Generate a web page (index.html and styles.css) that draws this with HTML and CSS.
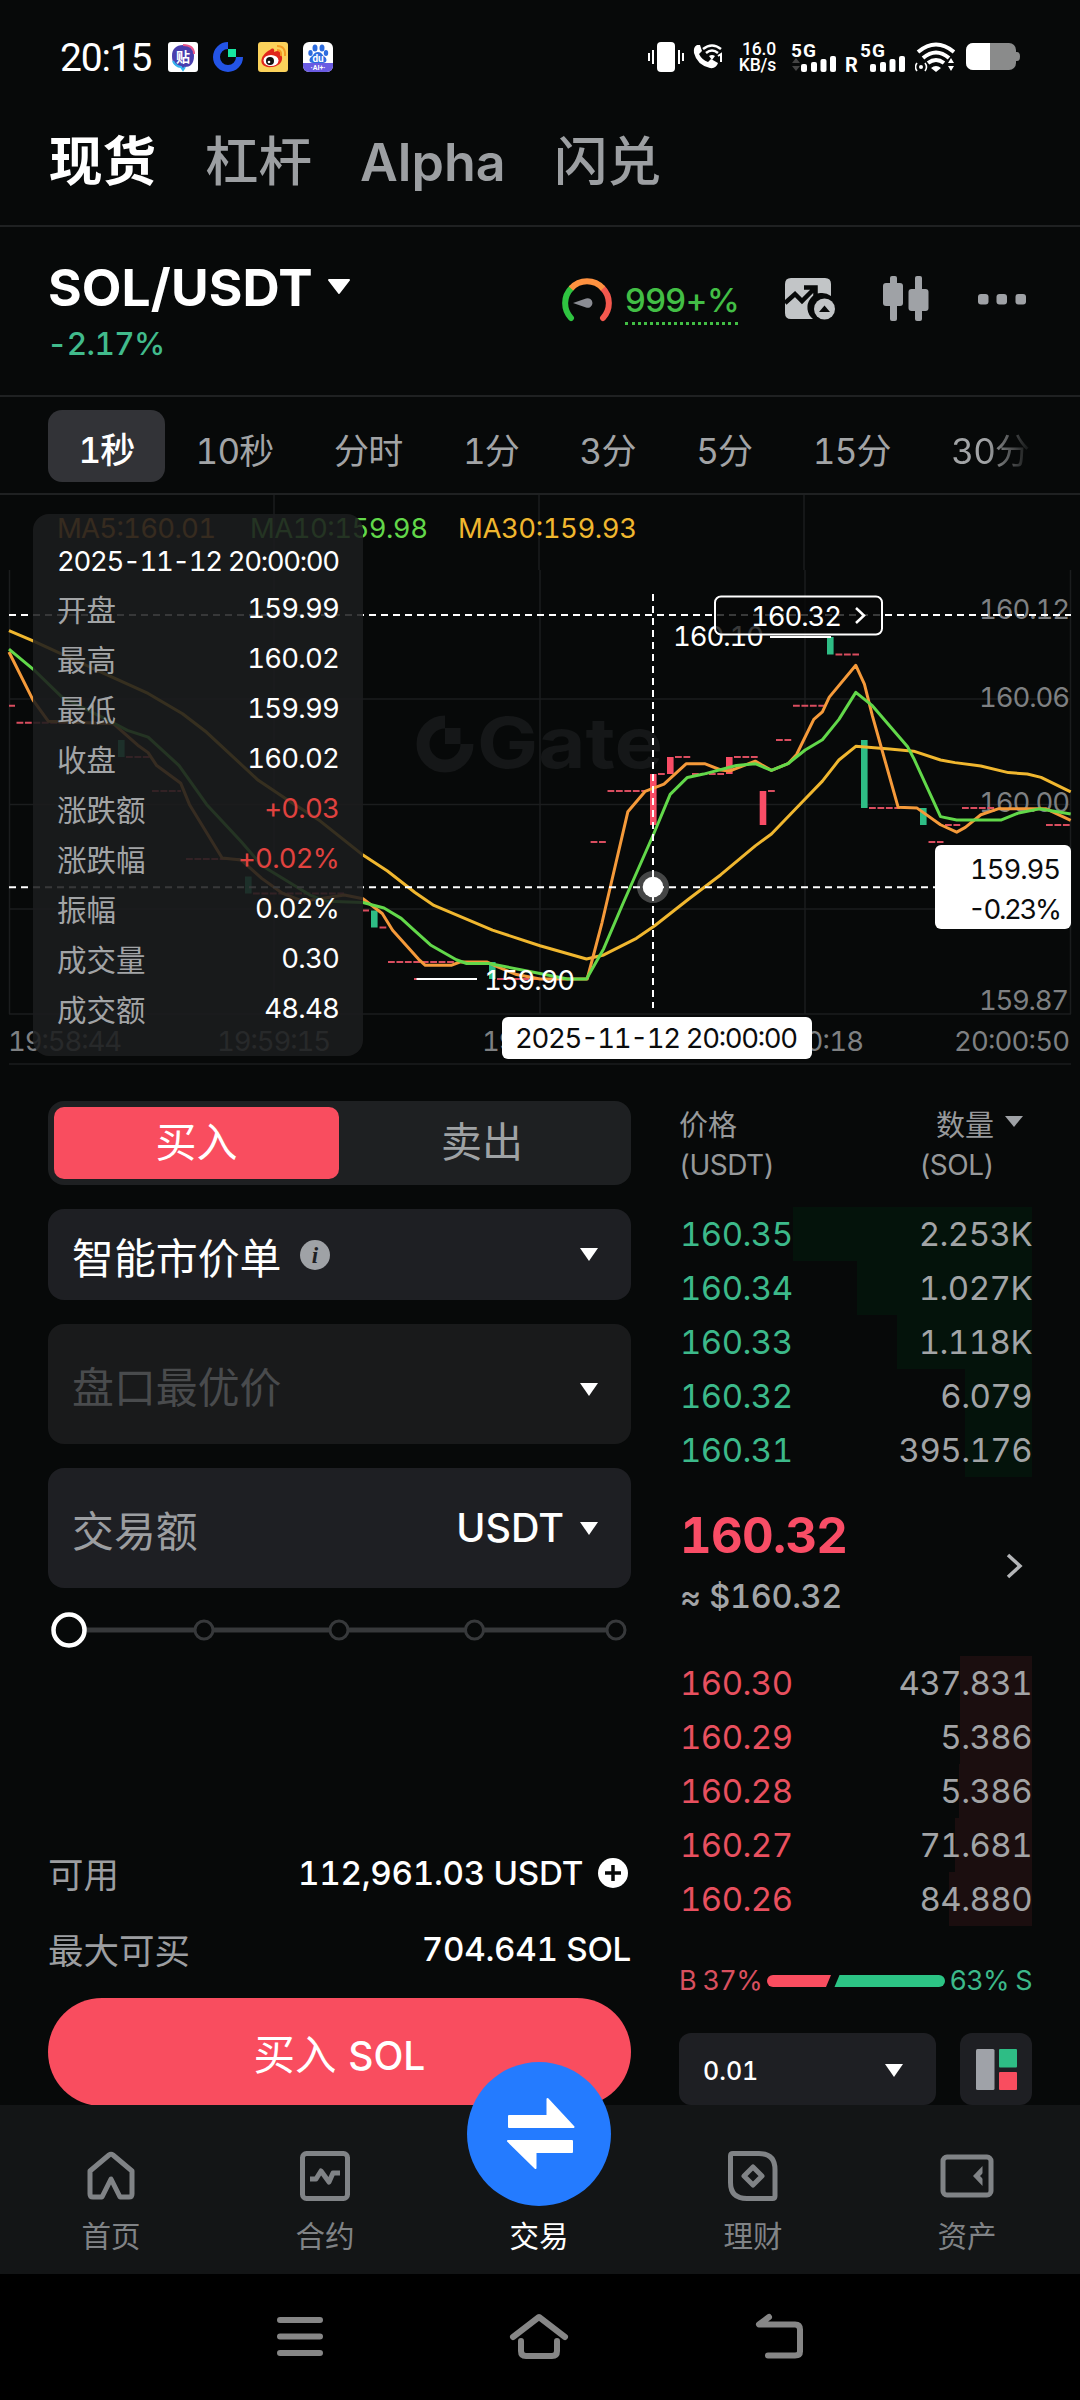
FILE: index.html
```html
<!DOCTYPE html>
<html lang="zh-CN">
<head>
<meta charset="utf-8">
<title>SOL/USDT</title>
<link rel="stylesheet" href="styles.css">
</head>
<body>
<div class="screen">
  <header class="status">
    <span class="clock">20:15</span>
    <div class="apps">
      <svg width="30" height="30" viewBox="0 0 30 30"><rect width="30" height="30" rx="3" fill="#fff"/><path d="M15 3c7 0 11 3 11 11s-4 11-9 11l-2 3-2-3C7 25 4 21 4 14S8 3 15 3z" fill="#4a3fae"/><path d="M5 19a10 10 0 0 0 8 6l2 3 2-3" fill="none" stroke="#35b4ee" stroke-width="2"/><path d="M15 3c7 0 11 3 11 9" fill="none" stroke="#e8568a" stroke-width="2"/><text x="15" y="20" class="tieba">贴</text></svg>
      <svg width="30" height="30" viewBox="0 0 30 30"><path d="M15 3.500A11.500 11.500 0 1 0 26.500 15" fill="none" stroke="#2354e6" stroke-width="7"/><rect x="15" y="7" width="8" height="8" fill="#17e6a1"/></svg>
      <svg width="30" height="30" viewBox="0 0 30 30"><rect width="30" height="30" rx="3" fill="#fbd25b"/><path d="M12 8c3-3 5-1 4 2 4-2 7-1 6 2 4 2 3 12-8 13C5 26 2 21 4 16c1-3 5-7 8-8z" fill="#e0261c"/><ellipse cx="13" cy="18.500" rx="7.500" ry="5.500" fill="#fff"/><circle cx="12" cy="19" r="4" fill="#111"/><circle cx="11" cy="20" r="1.300" fill="#fff"/><path d="M19 8q5 0 4 6M19 4q9 0 8 10" fill="none" stroke="#f59b23" stroke-width="2"/></svg>
      <svg width="30" height="30" viewBox="0 0 30 30"><rect width="30" height="30" rx="6" fill="#fff"/><path d="M0 21h30v3a6 6 0 0 1-6 6H6a6 6 0 0 1-6-6z" fill="#6a5be2"/><g fill="#2d6cdf"><ellipse cx="12" cy="6" rx="2.500" ry="3.500"/><ellipse cx="19" cy="6" rx="2.500" ry="3.500"/><ellipse cx="7.500" cy="11" rx="2.200" ry="3"/><ellipse cx="23" cy="11" rx="2.200" ry="3"/><path d="M15 10c4 0 4 3 7 5 3 3 1 6-2 6H10c-3 0-5-3-2-6 3-2 3-5 7-5z"/></g><text x="15" y="19.500" class="du">du</text><text x="15" y="28" class="ai">·AI+·</text></svg>
    </div>
    <div class="signals">
      <svg width="36" height="30" viewBox="0 0 36 30" fill="#fff"><rect x="9" width="18" height="30" rx="4"/><path d="M4 8h2v14H4zM0 11h2v8H0zM30 8h2v14h-2zM34 11h2v8h-2z"/></svg>
      <svg class="i-call" width="30" height="26" viewBox="0 0 30 26" fill="none" stroke="#fff"><path d="M4 1l3 0 2 6-3 3q3 6 9 8l3-3 7 4q-2 6-8 5Q4 21 1 9 0 3 4 1z" fill="#fff" stroke="none"/><path d="M10 5q9-7 18 0M13 9q6-5 12 0" stroke-width="2.500"/><path d="M16 12q3-2 6 0l-3 4z" fill="#fff" stroke="none"/><path d="M25 12l3-2v8" stroke-width="2"/></svg>
      <span class="speed">16.0<br>KB/s</span>
      <svg class="i-sig" width="44" height="30" viewBox="0 0 44 30" fill="#fff"><text x="-1" y="14.500" class="g5" textLength="25">5G</text><path d="M0 21l4-5 4 5zM0 24l4 5 4-5z" fill="#444"/><rect x="9" y="22" width="6" height="8" rx="2"/><rect x="19" y="20" width="6" height="10" rx="2"/><rect x="28.500" y="17" width="6" height="13" rx="2"/><rect x="38" y="14" width="6" height="16" rx="2"/></svg>
      <svg class="i-sig2" width="60" height="30" viewBox="0 0 60 30" fill="#fff"><text x="-1" y="29.500" class="g5 gr">R</text><text x="14" y="14.500" class="g5" textLength="25">5G</text><rect x="24" y="22" width="6" height="8" rx="2"/><rect x="34" y="20" width="6" height="10" rx="2"/><rect x="43.500" y="17" width="6" height="13" rx="2"/><rect x="53" y="14" width="6" height="16" rx="2"/></svg>
      <svg class="i-wifi" width="40" height="30" viewBox="0 0 40 30" fill="none" stroke="#fff"><path d="M3 10q18-15 36 0M8 16q13-11 26 0M13 21q8-6 16 0" stroke-width="4"/><path d="M16 26q5-4 10 0l-5 4zM33 21l3-5 3 5zM33 24l3 5 3-5z" fill="#fff" stroke="none"/><circle cx="6" cy="25" r="2" fill="#fff" stroke="none"/><path d="M2 21q-3 4 0 8M10 21q3 4 0 8" stroke-width="1.600"/></svg>
      <svg class="i-bat" width="54" height="28" viewBox="0 0 54 28"><rect width="50" height="27" rx="7" fill="#8a8b8b"/><path d="M50 9h1q3 0 3 4.500T51 18h-1z" fill="#8a8b8b"/><path d="M7 0h17v27H7a7 7 0 0 1-7-7V7a7 7 0 0 1 7-7z" fill="#fff"/></svg>
    </div>
  </header>

  <nav class="modes"><b>现货</b><span>杠杆</span><span class="alpha">Alpha</span><span>闪兑</span></nav>

  <section class="pair">
    <div class="pair-name">
      <h1>SOL/USDT<svg width="24" height="16" viewBox="0 0 24 16"><path d="M2 1h20L12 14z" fill="#fff" stroke="#fff" stroke-width="2" stroke-linejoin="round"/></svg></h1>
      <p class="chg">-2.17%</p>
    </div>
    <div class="tools">
      <svg class="gauge" width="50" height="44" viewBox="0 0 50 44" fill="none" stroke-width="6"><path d="M9 40A21.500 21.500 0 0 1 9.500 10" stroke="#2fc441" stroke-linecap="round"/><path d="M41 40A21.500 21.500 0 0 0 40.500 10" stroke="#f4584e" stroke-linecap="round"/><path d="M9 10.500A21.500 21.500 0 0 1 41 10.500" stroke="#ff9240"/><path d="M11 25l13-4.500a4.800 4.800 0 1 1 0 9z" fill="#8b8d94"/></svg>
      <span class="lev">999+%</span>
      <svg class="i-img" width="50" height="42" viewBox="0 0 50 42"><path d="M6 0h34q6 0 6 6v12a14 14 0 0 0-18 23H6q-6 0-6-6V6q0-6 6-6z" fill="#c2c5c7"/><path d="M0 25l10-9 7 7 13-13M19 9.500h11.500V19" fill="none" stroke="#070909" stroke-width="4.500"/><circle cx="39.500" cy="31" r="10.500" fill="#c2c5c7"/><path d="M34 34l5.500-6.500L45 34z" fill="#070909"/></svg>
      <svg class="i-candle" width="46" height="46" viewBox="0 0 46 46" fill="#9fa2a6"><rect x="7" width="7" height="45" rx="2"/><rect y="7" width="20" height="23" rx="3"/><rect x="32" width="7" height="45" rx="2"/><rect x="25.500" y="13" width="20" height="22" rx="3"/></svg>
      <svg class="i-dots" width="48" height="11" viewBox="0 0 48 11" fill="#9fa2a6"><rect width="10.500" height="10.500" rx="3"/><rect x="18.500" width="10.500" height="10.500" rx="3"/><rect x="37.500" width="10.500" height="10.500" rx="3"/></svg>
    </div>
  </section>

  <nav class="periods"><b>1秒</b><span>10秒</span><span>分时</span><span>1分</span><span>3分</span><span>5分</span><span>15分</span><span>30分</span></nav>

  <section class="chart">
    <svg class="plot" width="1080" height="570" viewBox="0 495 1080 570">
      <path class="grid" d="M274 495V570M539 495V570M804 495V570M9.500 570V1014M274 570V1014M540 570V1014M805 570V1014M1070.500 570V1014M9 699H1071M9 804.500H1071M9 909H1071M9 1014H1071M9 1064H1071"/>
      <g class="mark"><path d="M445 722a22 22 0 1 0 22 22" fill="none" stroke-width="13"/><rect x="445" y="728" width="15.500" height="16" stroke="none"/><text x="477" y="768" textLength="186" lengthAdjust="spacingAndGlyphs">Gate</text></g>
      <g class="t ma"><text x="57" y="538" textLength="159" fill="#f0942f">MA5:160.01</text><text x="250" y="538" textLength="178" fill="#62d84a">MA10:159.98</text><text x="458" y="538" textLength="179" fill="#f0b72f">MA30:159.93</text></g>
      <g class="t axis">
        <text x="979" y="619" textLength="91">160.12</text><text x="979" y="707" textLength="91">160.06</text><text x="979" y="812" textLength="91">160.00</text><text x="979" y="1010" textLength="90">159.87</text>
        <text x="8" y="1051" textLength="114">19:58:44</text><text x="217" y="1051" textLength="114">19:59:15</text><text x="482" y="1051" textLength="114">19:59:47</text><text x="748" y="1051" textLength="116">20:00:18</text><text x="954" y="1051" textLength="116">20:00:50</text>
      </g>
      <path class="flat" d="M9 705.700h6M16.500 722.700H114M126 757h24M152 791h29M186 859h55M253 893.600h91M363 910.600h6M379.500 927.600h7M388 962h66M414 979h4M497 979h88M590.600 842h15.500M607.500 791H645M658 774h7M675 757h15.500M692 774h32M734 757h24M768 791h7M776 740h16M793 705.700h32M835.500 654.600H859M869 808h31M928.500 842h15M945 825h15.500M962 808h33M1046 825h25"/>
      <path class="up" d="M650 774h6.600v51H650zM667 757h6.600v17H667zM726 757h6.600v17H726zM759.700 791h6.600v34h-6.600z"/>
      <path class="down" d="M118 740h6.600v17H118zM245 876.600h6.600v17H245zM371 910.600h6.600v17H371zM489 962h6.600v17H489zM827 637h6.600v17.600H827zM861 740h6.600v68H861zM920 808h6.600v17H920z"/>
      <svg x="0" y="490" width="1080" height="580" viewBox="0 0 3136 1568" preserveAspectRatio="none" class="lines">
        <polyline stroke="#f0b72f" points="26,380 96,408 300,495 430,550 530,605 600,655 750,785 830,835 930,895 1054,987 1125,1030 1205,1088 1260,1123 1430,1190 1568,1232 1703,1268 1753,1257 1848,1212 1901,1178 1998,1107 2093,1040 2193,962 2240,930 2335,838 2388,787 2436,730 2485,693 2583,700 2653,706 2731,730 2773,737 2848,746 2928,764 2983,768 3023,777 3109,816"/>
        <polyline stroke="#f59a3a" points="26,438 96,568 140,625 330,632 400,690 430,710 455,745 525,793 550,850 645,995 700,1000 760,1050 820,1090 880,1112 1000,1095 1054,1105 1110,1145 1140,1190 1215,1268 1235,1285 1310,1285 1335,1276 1415,1276 1440,1287 1500,1310 1568,1322 1705,1322 1748,1170 1823,870 1873,815 1928,795 1993,740 2046,740 2093,757 2118,760 2193,733 2240,758 2288,740 2313,715 2363,620 2388,600 2408,560 2485,474 2510,525 2533,610 2608,858 2663,860 2731,905 2778,925 2803,912 2848,878 2898,862 3038,862 3109,893"/>
        <polyline stroke="#62d84a" points="26,430 96,484 180,560 330,630 370,650 430,668 520,745 600,850 700,950 760,1015 830,1055 900,1095 950,1112 1054,1115 1115,1130 1165,1158 1200,1188 1250,1230 1325,1270 1355,1280 1420,1280 1568,1307 1648,1322 1703,1322 1753,1240 1808,1120 1898,930 1946,823 1996,777 2043,768 2138,745 2193,740 2240,758 2288,740 2338,703 2388,675 2436,620 2485,547 2533,583 2636,695 2653,725 2731,883 2778,892 2908,892 2958,873 3018,862 3109,876"/>
      </svg>
      <path d="M416.500 979H477M770 637h61" stroke="#fff" stroke-width="2"/>
      <g class="t" fill="#fff"><text x="484" y="990" textLength="91">159.90</text><text x="673" y="646" textLength="91">160.10</text></g>
      <path class="cross" d="M9 615H1071M9 887.300H935M653 594v414"/>
      <circle cx="653" cy="887" r="16" fill="#fff" fill-opacity=".25"/><circle cx="653" cy="887" r="10.300" fill="#fff"/>
      <rect x="715" y="596.500" width="167" height="38" rx="6" fill="#070909" fill-opacity=".8" stroke="#fff" stroke-width="2"/>
      <text class="t" x="751" y="626" textLength="91" fill="#fff">160.32</text>
      <path d="M856 608l8 7.500-8 7.500" fill="none" stroke="#fff" stroke-width="2.500"/>
      <g class="t" fill="#0b0c0d"><rect x="935" y="845" width="136" height="84" rx="6" fill="#fff"/><text x="970" y="879" textLength="91">159.95</text><text x="968" y="919" textLength="94">-0.23%</text>
      <rect x="502" y="1017" width="310" height="42" rx="6" fill="#fff"/><text x="515" y="1048" textLength="283">2025-11-12 20:00:00</text></g>
    </svg>
    <dl class="tip">
      <dt class="when">2025-11-12 20:00:00</dt>
      <div><dt>开盘</dt><dd>159.99</dd></div>
      <div><dt>最高</dt><dd>160.02</dd></div>
      <div><dt>最低</dt><dd>159.99</dd></div>
      <div><dt>收盘</dt><dd>160.02</dd></div>
      <div><dt>涨跌额</dt><dd class="rise">+0.03</dd></div>
      <div><dt>涨跌幅</dt><dd class="rise">+0.02%</dd></div>
      <div><dt>振幅</dt><dd>0.02%</dd></div>
      <div><dt>成交量</dt><dd>0.30</dd></div>
      <div><dt>成交额</dt><dd>48.48</dd></div>
    </dl>
  </section>

  <main class="trade">
    <section class="form">
      <div class="side"><b>买入</b><span>卖出</span></div>
      <div class="field type"><span>智能市价单</span><svg class="info" width="30" height="30" viewBox="0 0 30 30"><circle cx="15" cy="15" r="15" fill="#9fa2a6"/><text x="15" y="23">i</text></svg><i class="caret"></i></div>
      <div class="field best"><span>盘口最优价</span><i class="caret"></i></div>
      <div class="field amount"><span>交易额</span><em>USDT</em><i class="caret"></i></div>
      <svg class="slider" width="583" height="40" viewBox="0 0 583 40"><path d="M21 20H568" stroke="#37393b" stroke-width="5"/><g fill="#070909" stroke="#37393b" stroke-width="3"><circle cx="156" cy="20" r="9"/><circle cx="291" cy="20" r="9"/><circle cx="426.500" cy="20" r="9"/><circle cx="568" cy="20" r="9"/></g><circle cx="21" cy="20" r="15.500" fill="#070909" stroke="#fff" stroke-width="4.500"/></svg>
      <div class="row avail"><span>可用</span><em>112,961.03 USDT</em><svg width="30" height="30" viewBox="0 0 30 30"><circle cx="15" cy="15" r="15" fill="#fff"/><path d="M15 7v16M7 15h16" stroke="#070909" stroke-width="3.500"/></svg></div>
      <div class="row max"><span>最大可买</span><em>704.641 SOL</em></div>
      <button class="buy">买入 <em>SOL</em></button>
    </section>

    <section class="book">
      <div class="head"><div>价格<br><span>(USDT)</span></div><div class="qty">数量<br><span>(SOL)</span></div><svg width="18" height="12" viewBox="0 0 18 12"><path d="M0 0h18L9 11z" fill="#9fa2a6"/></svg></div>
      <ul class="asks">
        <li style="--d:239px"><span>160.35</span><span>2.253K</span></li>
        <li style="--d:175px"><span>160.34</span><span>1.027K</span></li>
        <li style="--d:135px"><span>160.33</span><span>1.118K</span></li>
        <li style="--d:67px"><span>160.32</span><span>6.079</span></li>
        <li style="--d:67px"><span>160.31</span><span>395.176</span></li>
      </ul>
      <div class="last"><div><strong>160.32</strong><small>≈ $160.32</small></div><svg width="18" height="26" viewBox="0 0 18 26"><path d="M3 2l12 11L3 24" fill="none" stroke="#b4b6b8" stroke-width="3.500"/></svg></div>
      <ul class="bids">
        <li style="--d:72px"><span>160.30</span><span>437.831</span></li>
        <li style="--d:72px"><span>160.29</span><span>5.386</span></li>
        <li style="--d:73px"><span>160.28</span><span>5.386</span></li>
        <li style="--d:77px"><span>160.27</span><span>71.681</span></li>
        <li style="--d:83px"><span>160.26</span><span>84.880</span></li>
      </ul>
      <div class="ratio"><span class="b">B 37%</span><svg width="178" height="12" viewBox="0 0 178 12"><path d="M6 0h58l-5 12H6A6 6 0 0 1 6 0z" fill="#f94d5f"/><path d="M72.500 0H172a6 6 0 0 1 0 12H67.500z" fill="#2cc485"/></svg><span class="s">63% S</span></div>
      <div class="foot"><div class="step"><span>0.01</span><i class="caret"></i></div><div class="view"><svg width="41" height="41" viewBox="0 0 41 41"><rect width="18.500" height="41" rx="1.500" fill="#9fa2a8"/><rect x="23" width="18" height="18.500" rx="1" fill="#2ebd85"/><rect x="23" y="23" width="18" height="18" rx="1" fill="#f94d5f"/></svg></div></div>
    </section>
  </main>

  <nav class="tabs">
    <a><svg width="54" height="54" viewBox="0 0 54 54"><path d="M6 22L25 6q2-1.500 4 0l19 16v23q0 3-3 3h-9l-9-18-9 18H9q-3 0-3-3z"/></svg>首页</a>
    <a><svg width="54" height="54" viewBox="0 0 54 54"><rect x="4.500" y="4.500" width="45" height="45" rx="4"/><path d="M12 30h6l5-8 8 11 4-9h7"/></svg>合约</a>
    <a class="on"><i class="fab"><svg width="144" height="144" viewBox="0 0 144 144"><g fill="#fff" stroke="#fff" stroke-width="2" stroke-linejoin="round"><path d="M42 54h38.500V37l26 28H42zM105 79H41l27.500 27V90H105z"/></g></svg></i>交易</a>
    <a><svg width="54" height="54" viewBox="0 0 54 54"><path d="M7 4.500h26q16 0 16 16V47q0 2.500-2.500 2.500H21q-16.500 0-16.500-16V7q0-2.500 2.500-2.500z"/><path d="M27 18l9 9-9 9-9-9z"/></svg>理财</a>
    <a><svg width="54" height="54" viewBox="0 0 54 54"><rect x="3" y="8" width="48" height="38" rx="4"/><path d="M42.500 17v20l-9.500-10z" fill="#808386" stroke="none"/><path d="M43 24v6L40 27z" fill="#131516" stroke="none"/></svg>资产</a>
  </nav>

  <footer class="sys">
    <svg width="46" height="42" viewBox="0 0 46 42"><path d="M3 5h40M3 21.500h40M3 38h40"/></svg>
    <svg width="60" height="48" viewBox="0 0 60 48"><path d="M4 25L30 5l26 20M12 29v10q0 5 5 5h26q5 0 5-5V29"/></svg>
    <svg width="50" height="46" viewBox="0 0 50 46"><path d="M14 4L4 11.500h36q5 0 5 5v22q0 4-5 4H13"/></svg>
  </footer>
</div>
</body>
</html>
```

FILE: styles.css
```css
* { box-sizing: border-box; margin: 0; padding: 0; }
body { background: #070909; }
em, i { font-style: normal; }
ul { list-style: none; }
svg { display: block; flex: none; }
.screen {
  width: 1080px; height: 2400px; overflow: hidden;
  background: #070909; color: #fff;
  font-family: Inter, "Noto Sans CJK SC", sans-serif;
  display: flex; flex-direction: column;
  font-feature-settings: "tnum";
}

/* status bar */
.status { height: 114px; display: flex; align-items: center; padding: 0 60px 0 60px; font-family: Roboto, "Noto Sans CJK SC", sans-serif; font-feature-settings: normal; }
.clock { font-size: 39px; width: 108px; padding-top: 2px; letter-spacing: -1.200px; white-space: nowrap; }
.apps { display: flex; gap: 15px; }
.tieba { font-size: 14px; font-weight: 700; fill: #fff; text-anchor: middle; }
.du { font-size: 10px; font-weight: 700; fill: #fff; text-anchor: middle; }
.ai { font-size: 7px; font-weight: 700; fill: #fff; text-anchor: middle; }
.signals { display: flex; align-items: center; margin-left: auto; }
.i-call { margin-left: 9px; }
.speed { margin-left: 15px; width: 38px; padding-top: 1px; font-size: 17.500px; line-height: 16.500px; letter-spacing: -.2px; font-weight: 500; text-align: right; }
.i-sig { margin-left: 16px; }
.i-sig2 { margin-left: 10px; }
.i-wifi { margin-left: 9px; }
.i-bat { margin-left: 11px; }
.i-sig, .i-sig2 { overflow: visible; }
.g5 { font: 700 19px Roboto, sans-serif; }
.gr { font-size: 20px; }

/* market switch */
.modes { height: 114px; padding: 0 0 16px 49px; display: flex; align-items: center; gap: 49px; font-size: 53.500px; font-weight: 500; color: #9c9fa2; border-bottom: 2px solid #1f2122; white-space: nowrap; line-height: 60px; }
.modes b { color: #fff; font-weight: 700; }
.modes .alpha { font-size: 52px; font-weight: 600; width: 146px; margin: 2px -1px 0 -1px; }

/* pair */
.pair { height: 170px; border-bottom: 2px solid #1f2122; display: flex; justify-content: space-between; padding: 34px 54px 0 48px; }
.pair h1 { font-size: 51.500px; line-height: 52px; font-weight: 700; letter-spacing: .1px; display: flex; align-items: center; gap: 14px; }
.chg { font-size: 31.500px; line-height: 40px; margin-top: 11px; color: #41bb8c; font-weight: 500; letter-spacing: -.6px; margin-left: -1px; }
.tools { display: flex; align-items: center; height: 76px; }
.gauge { margin-top: 2px; }
.lev { font-size: 33px; line-height: 34px; height: 42px; margin: 10px 0 0 13px; width: 113px; font-weight: 500; letter-spacing: -.6px; color: #42be45; border-bottom: 3px dotted #42be45; font-feature-settings: normal; }
.i-img { margin-left: 47px; }
.i-candle { margin-left: 48px; }
.i-dots { margin-left: 49px; }

/* periods */
.periods { height: 98px; padding: 13px 0 11px 48px; display: flex; align-items: center; gap: 60.500px; font-size: 35px; letter-spacing: -.8px; color: #a2a4a6; border-bottom: 2px solid #1f2122; white-space: nowrap; font-weight: 400; line-height: 44px; }
.periods b { flex: none; width: 117px; height: 72px; line-height: 80px; border-radius: 14px; text-align: center; background: #323337; color: #fff; font-weight: 500; margin-right: -30px; }
.periods span { padding-top: 10px; }
.periods span:last-child { -webkit-mask-image: linear-gradient(90deg, #000 45%, transparent 105%); }

/* chart */
.chart { position: relative; height: 570px; }
.grid { fill: none; stroke: #1b1d1e; stroke-width: 1.500; }
.mark { fill: #151718; stroke: #151718; }
.mark text { font-size: 70px; font-weight: 700; stroke: none; }
.t { font-size: 27.500px; }
.axis { fill: #7e8082; }
.flat { stroke: #d94d5f; stroke-width: 2; stroke-dasharray: 6.800 1.640; fill: none; }
.up { fill: #f94d66; }
.down { fill: #2ebd85; }
.lines polyline { fill: none; stroke-width: 3px; vector-effect: non-scaling-stroke; stroke-linejoin: round; }
.cross { stroke: #fff; stroke-width: 2; stroke-dasharray: 7 5; fill: none; }
.tip { position: absolute; left: 33px; top: 19px; width: 330px; height: 542px; border-radius: 16px; padding: 26px 24px 0 24px; background: rgba(27, 28, 30, .88); font-size: 27.500px; }
.tip .when { height: 43px; line-height: 42px; white-space: nowrap; letter-spacing: -1.350px; }
.tip div { height: 50px; display: flex; justify-content: space-between; align-items: center; }
.tip div dt { font-size: 29.500px; color: #a2a4a6; }
.tip dd { letter-spacing: -.8px; }
.tip .rise { color: #e0423f; }

/* trade */
.trade { height: 1040px; display: flex; justify-content: space-between; padding: 36px 48px 0; }
.form { width: 583px; display: flex; flex-direction: column; }
.side { height: 84px; border-radius: 16px; background: #1e2022; padding: 6px; display: flex; font-size: 41px; text-align: center; line-height: 71px; flex: none; }
.side b { width: 285px; border-radius: 10px; background: #f94d5f; font-weight: 400; }
.side span { flex: 1; color: #9fa2a4; }
.field { border-radius: 16px; background: #1e1f23; margin-top: 24px; padding: 0 33px 0 24px; display: flex; align-items: center; font-size: 41.900px; flex: none; }
.caret { border: 9px solid transparent; border-top: 13px solid #fff; border-bottom: 0; margin-left: auto; }
.type { height: 91px; }
.type span { padding-top: 1px; }
.info { margin-left: 19px; }
.info text { font: italic 700 23px "Liberation Serif", serif; text-anchor: middle; fill: #1e1f23; }
.best { height: 120px; background: #191a1b; color: #494b4d; }
.best .caret { margin-top: 11px; }
.amount { height: 120px; color: #9c9ea1; }
.amount em { margin-left: auto; color: #fff; font-size: 39.500px; font-weight: 500; }
.amount .caret { margin-left: 16px; }
.slider { margin-top: 22px; }
.row { display: flex; align-items: center; color: #9c9ea1; font-size: 35.500px; height: 76px; flex: none; }
.row span { margin-top: -2px; }
.row em { margin-left: auto; color: #fff; font-size: 33.200px; font-weight: 500; letter-spacing: -.3px; white-space: nowrap; }
.avail { margin-top: 185px; }
.avail svg { margin-left: 15px; margin-right: 3px; }
.buy { margin-top: 11px; height: 108px; flex: none; border: 0; border-radius: 54px; background: #f94d5f; color: #fff; font: 400 41.500px Inter, "Noto Sans CJK SC", sans-serif; padding: 0; }
.buy em { font-size: 39px; font-weight: 500; }

/* order book */
.book { width: 353px; display: flex; flex-direction: column; font-size: 33px; }
.head { height: 106px; display: flex; color: #97999b; font-size: 29px; line-height: 39px; padding: 5px 9px 0 0; }
.head span { font-size: 28px; letter-spacing: -.5px; }
.qty { margin-left: auto; margin-right: 11px; text-align: right; }
.head svg { margin-top: 10px; }
.book li { height: 54px; display: flex; justify-content: space-between; align-items: center; color: #a2a4a6; letter-spacing: -.550px; padding-left: 1px; background: linear-gradient(var(--c), var(--c)) right / var(--d) 100% no-repeat; }
.asks { --c: #04130b; }
.bids { --c: #1b0e0f; padding-top: 1px; }
.asks span:first-child { color: #3cb98a; }
.bids span:first-child { color: #e8505f; }
.last { height: 179px; display: flex; justify-content: space-between; align-items: center; padding: 3px 9px 0 1px; }
.last svg { margin-top: -3px; }
.last strong { display: block; font-size: 49px; line-height: 58px; color: #f94d66; letter-spacing: -.7px; }
.last small { display: block; font-size: 32.500px; line-height: 64px; color: #a2a4a6; font-weight: 500; letter-spacing: -.3px; }
.ratio { height: 107px; padding-top: 2px; display: flex; align-items: center; font-size: 27px; white-space: nowrap; letter-spacing: -.7px; }
.ratio .b { color: #d9505f; width: 88px; }
.ratio .s { color: #3cb98a; margin-left: auto; }
.foot { display: flex; gap: 24px; height: 72px; }
.step { width: 257px; border-radius: 12px; background: #1e1f23; padding: 0 33px 0 24px; display: flex; align-items: center; font-size: 25px; font-weight: 500; }
.step span { padding-top: 4px; }
.step .caret { margin-top: 2px; }
.view { width: 72px; border-radius: 12px; background: #1e1f23; display: grid; place-items: center; }

/* bottom tabs */
.tabs { position: relative; height: 169px; flex: none; background: #131516; padding: 0 6px 0 4px; display: grid; grid-template-columns: repeat(5, 1fr); color: #808386; font-size: 29.500px; }
.tabs a { display: flex; flex-direction: column; align-items: center; padding-top: 44px; line-height: 66px; }
.tabs svg { fill: none; stroke: #808386; stroke-width: 5; stroke-linejoin: round; }
.tabs .on { color: #fff; padding-top: 98px; }
.fab { position: absolute; top: -43px; left: 467px; width: 144px; height: 144px; border-radius: 50%; background: #247bff; }

/* system navigation */
.sys { height: 126px; flex: none; background: #000; display: flex; justify-content: space-between; align-items: center; padding: 0 275px 3px 277px; }
.sys svg { fill: none; stroke: #868686; stroke-width: 6; stroke-linecap: round; stroke-linejoin: round; }
```
